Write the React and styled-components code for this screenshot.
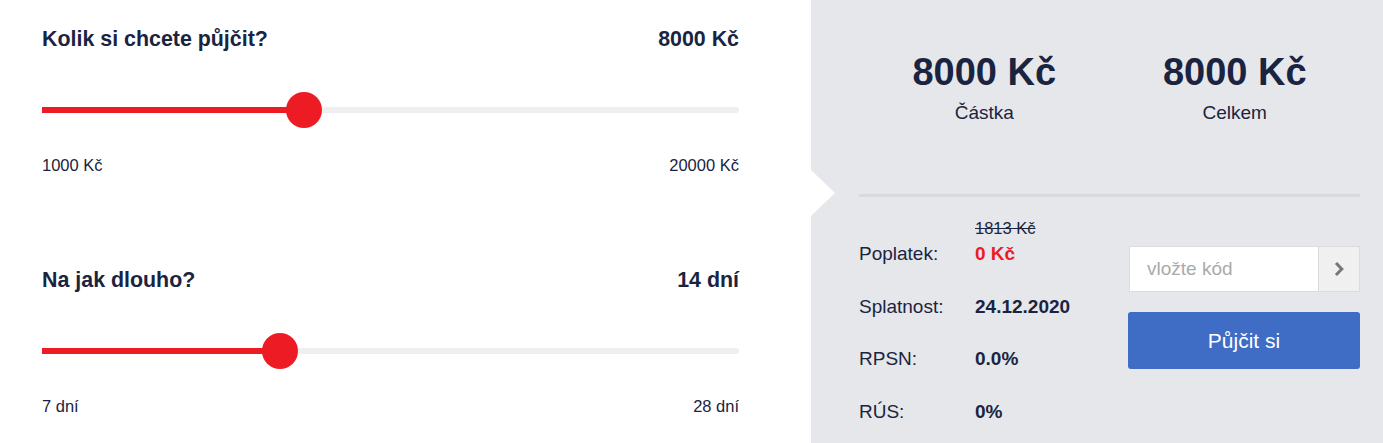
import React from "react";
import styled, { createGlobalStyle } from "styled-components";

const GlobalStyle = createGlobalStyle`
  html, body { margin: 0; padding: 0; background: #ffffff; }
  body { font-family: "Liberation Sans", Arial, sans-serif; color: #1a2440; }
  * { box-sizing: border-box; }
`;

const NAVY = "#1a2440";
const RED = "#ed1c24";

const Page = styled.div`
  display: flex;
  width: 1383px;
  height: 443px;
  overflow: hidden;
`;

const LeftPanel = styled.div`
  width: 811px;
  flex: none;
  padding: 0 72px 0 42px;
  background: #fff;
`;

const Section = styled.section`
  height: 241px;
  padding-top: 27px;
`;

const HeaderRow = styled.div`
  display: flex;
  justify-content: space-between;
  font-size: 21.4px;
  line-height: 25px;
  font-weight: 700;
  color: ${NAVY};
`;

const SliderBox = styled.div`
  position: relative;
  height: 36px;
  margin-top: 40px;
`;

const Track = styled.div`
  position: absolute;
  left: 0;
  right: 0;
  top: 15px;
  height: 6px;
  border-radius: 3px;
  background: #efefef;
`;

const Fill = styled.div`
  position: absolute;
  left: 0;
  top: 15px;
  height: 6px;
  background: ${RED};
`;

const Thumb = styled.div`
  position: absolute;
  top: 0;
  width: 36px;
  height: 36px;
  margin-left: -18px;
  border-radius: 50%;
  background: ${RED};
`;

const RangeLabels = styled.div`
  display: flex;
  justify-content: space-between;
  margin-top: 28px;
  font-size: 16.5px;
  line-height: 18px;
  color: ${NAVY};
`;

const RightPanel = styled.div`
  position: relative;
  flex: 1;
  background: #e6e7eb;
  padding: 0 23px 0 48px;
`;

const Notch = styled.div`
  position: absolute;
  left: 0;
  top: 170px;
  width: 0;
  height: 0;
  border-top: 23.5px solid transparent;
  border-bottom: 23.5px solid transparent;
  border-left: 24px solid #fff;
`;

const Stats = styled.div`
  display: grid;
  grid-template-columns: 1fr 1fr;
  padding-top: 50px;
`;

const Stat = styled.div`
  display: flex;
  flex-direction: column;
  align-items: center;
`;

const StatValue = styled.div`
  font-size: 38px;
  line-height: 44px;
  font-weight: 700;
  color: ${NAVY};
`;

const StatLabel = styled.div`
  margin-top: 7.5px;
  font-size: 19px;
  line-height: 22px;
  color: ${NAVY};
`;

const Divider = styled.div`
  height: 3px;
  margin-top: 70.5px;
  background: #dadada;
`;

const Lower = styled.div`
  display: flex;
  justify-content: space-between;
`;

const Info = styled.div`
  display: flex;
  flex-direction: column;
  padding-top: 22px;
`;

const OldPrice = styled.div`
  padding-left: 116px;
  margin-bottom: 6.4px;
  font-size: 16.5px;
  line-height: 18px;
  color: ${NAVY};
  text-decoration: line-through;
`;

const Rows = styled.div`
  display: flex;
  flex-direction: column;
  gap: 30.4px;
`;

const Row = styled.div`
  display: flex;
  font-size: 19px;
  line-height: 22px;
`;

const Label = styled.div`
  width: 116px;
  color: ${NAVY};
`;

const Value = styled.div`
  font-weight: 700;
  color: ${(p) => (p.$accent ? RED : NAVY)};
`;

const Actions = styled.div`
  width: 232px;
  padding-top: 49px;
  display: flex;
  flex-direction: column;
  gap: 20px;
`;

const CodeField = styled.div`
  display: flex;
  height: 46px;
  border: 1px solid #dcdcdc;
  background: #fff;
  margin-left: 1px;
`;

const CodeInput = styled.input`
  flex: 1;
  min-width: 0;
  border: none;
  outline: none;
  padding: 0 0 0 17px;
  font-family: "Liberation Sans", Arial, sans-serif;
  font-size: 19px;
  color: ${NAVY};
  background: transparent;
  &::placeholder { color: #aaaaaa; }
`;

const CodeButton = styled.button`
  width: 41px;
  flex: none;
  border: none;
  border-left: 1px solid #dcdcdc;
  background: #f0f0f0;
  display: flex;
  align-items: center;
  justify-content: center;
  padding: 0;
  cursor: pointer;
`;

const Submit = styled.button`
  height: 57px;
  border: none;
  border-radius: 3px;
  background: #3f6cc4;
  color: #fff;
  font-family: "Liberation Sans", Arial, sans-serif;
  font-size: 21px;
  cursor: pointer;
`;

function Slider({ min, max, value }) {
  const ratio = (value - min) / (max - min);
  const pos = `calc(18px + (100% - 36px) * ${ratio})`;
  return (
    <SliderBox>
      <Track />
      <Fill style={{ width: pos }} />
      <Thumb style={{ left: pos }} />
    </SliderBox>
  );
}

function SliderSection({ title, display, min, max, value, minLabel, maxLabel }) {
  return (
    <Section>
      <HeaderRow>
        <span>{title}</span>
        <span>{display}</span>
      </HeaderRow>
      <Slider min={min} max={max} value={value} />
      <RangeLabels>
        <span>{minLabel}</span>
        <span>{maxLabel}</span>
      </RangeLabels>
    </Section>
  );
}

export default function App() {
  return (
    <Page>
      <GlobalStyle />
      <LeftPanel>
        <SliderSection
          title="Kolik si chcete půjčit?"
          display="8000 Kč"
          min={1000}
          max={20000}
          value={8000}
          minLabel="1000 Kč"
          maxLabel="20000 Kč"
        />
        <SliderSection
          title="Na jak dlouho?"
          display="14 dní"
          min={7}
          max={28}
          value={14}
          minLabel="7 dní"
          maxLabel="28 dní"
        />
      </LeftPanel>
      <RightPanel>
        <Notch />
        <Stats>
          <Stat>
            <StatValue>8000 Kč</StatValue>
            <StatLabel>Částka</StatLabel>
          </Stat>
          <Stat>
            <StatValue>8000 Kč</StatValue>
            <StatLabel>Celkem</StatLabel>
          </Stat>
        </Stats>
        <Divider />
        <Lower>
          <Info>
            <OldPrice>1813 Kč</OldPrice>
            <Rows>
              <Row>
                <Label>Poplatek:</Label>
                <Value $accent>0 Kč</Value>
              </Row>
              <Row>
                <Label>Splatnost:</Label>
                <Value>24.12.2020</Value>
              </Row>
              <Row>
                <Label>RPSN:</Label>
                <Value>0.0%</Value>
              </Row>
              <Row>
                <Label>RÚS:</Label>
                <Value>0%</Value>
              </Row>
            </Rows>
          </Info>
          <Actions>
            <CodeField>
              <CodeInput placeholder="vložte kód" />
              <CodeButton aria-label="Použít kód">
                <svg width="10" height="16" viewBox="0 0 10 16">
                  <path d="M2 2 L7.8 8 L2 14" fill="none" stroke="#777" strokeWidth="3" />
                </svg>
              </CodeButton>
            </CodeField>
            <Submit>Půjčit si</Submit>
          </Actions>
        </Lower>
      </RightPanel>
    </Page>
  );
}
